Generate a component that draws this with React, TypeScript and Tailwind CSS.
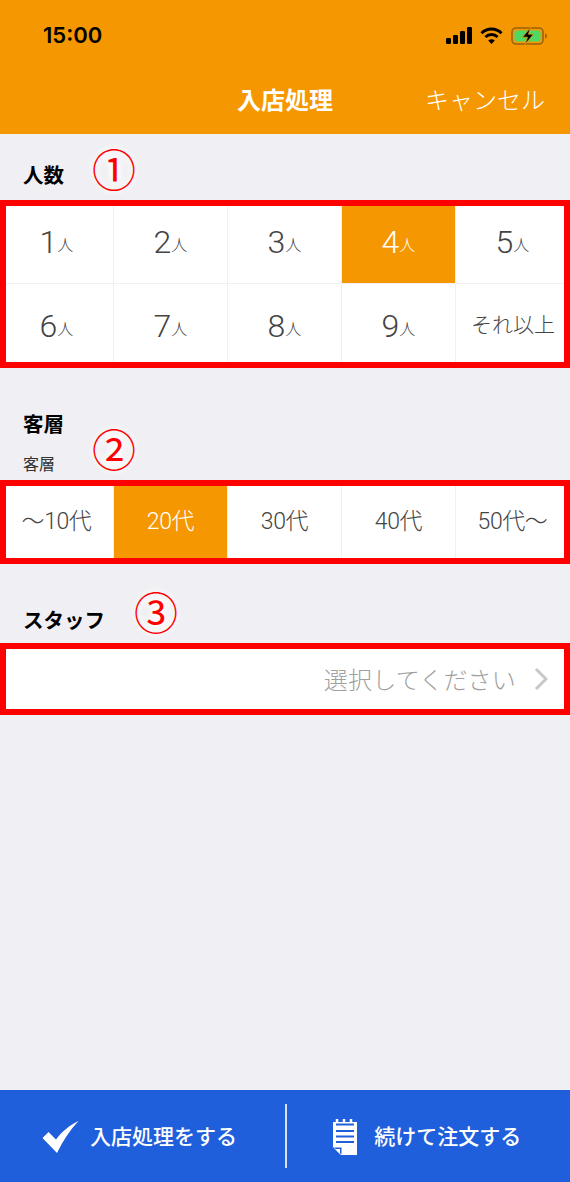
const jp = "font-['Liberation_Sans','Noto_Sans_CJK_JP',sans-serif]";
const thin = "font-['Roboto','Noto_Sans_CJK_JP',sans-serif] font-light";

const people = ["1", "2", "3", "4", "5", "6", "7", "8", "9"];
const ages = ["〜10代", "20代", "30代", "40代", "50代〜"];

function RedFrame() {
  return <div className="pointer-events-none absolute inset-0 border-[6px] border-[#ff0000]" />;
}

function Mark({ glyph, className }: { glyph: string; className: string }) {
  return (
    <span
      className={`absolute text-[44px] leading-none text-[#ff0000] font-['Noto_Sans_CJK_JP',sans-serif] [text-shadow:0_0_8px_#fff,0_0_8px_#fff,0_0_8px_#fff,0_0_8px_#fff] ${className}`}
    >
      {glyph}
    </span>
  );
}

function StatusIcons() {
  return (
    <div className="flex items-center gap-[8px]">
      <svg width="26" height="17" viewBox="0 0 26 17" fill="#000">
        <rect x="0" y="11" width="5" height="6" rx="1.2" />
        <rect x="7" y="8" width="5" height="9" rx="1.2" />
        <rect x="14" y="4" width="5" height="13" rx="1.2" />
        <rect x="21" y="0" width="5" height="17" rx="1.2" />
      </svg>
      <svg width="23" height="17" viewBox="0 0 23 17" fill="none" stroke="#000" strokeWidth="3">
        <path d="M1.5 6.2C7.2 0.6 15.8 0.6 21.5 6.2" />
        <path d="M5.4 10C8.9 6.7 14.1 6.7 17.6 10" />
        <path d="M11.5 17L8.2 13.4C10.2 11.9 12.8 11.9 14.8 13.4Z" fill="#000" stroke="none" />
      </svg>
      <svg width="37" height="18" viewBox="0 0 37 18" fill="none">
        <rect x="1" y="1" width="31" height="16" rx="4" stroke="#9a6310" strokeWidth="1.6" />
        <rect x="3.5" y="3.5" width="26" height="11" rx="2" fill="#4cd964" />
        <path d="M34 6.5C35.5 7 36 8 36 9C36 10 35.5 11 34 11.5Z" fill="#9a6310" />
        <path d="M19.5 0.5L11.5 10.2H16.5L14 17.5L22.5 7.2H17.5Z" fill="#000" stroke="#f59700" strokeWidth="0.8" />
      </svg>
    </div>
  );
}

export default function App() {
  return (
    <div className={`relative flex h-[1182px] w-[570px] flex-col overflow-hidden bg-[#efeff4] ${jp}`}>
      <header className="h-[134px] shrink-0 bg-[#f59700]">
        <div className="flex h-[71px] items-center justify-between pl-[43px] pr-[22px]">
          <span className="font-['Inter',sans-serif] text-[22px] font-semibold text-black">15:00</span>
          <StatusIcons />
        </div>
        <div className="relative flex h-[60px] items-center justify-center">
          <h1 className="text-[24px] font-bold text-white">入店処理</h1>
          <span className="absolute right-[25px] top-1/2 -translate-y-1/2 text-[24px] font-light text-white">キャンセル</span>
        </div>
      </header>

      <div className="flex h-[66px] items-center pl-[23px] pt-[18px]">
        <h2 className="text-[20.5px] font-bold text-black">人数</h2>
      </div>
      <section className="relative grid h-[168px] grid-cols-5 grid-rows-2 bg-white">
        {people.map((n) => (
          <div
            key={n}
            className={`flex items-center justify-center border-r-[1.5px] border-b-[1.5px] border-[#efeff4] ${thin} ${n === "4" ? "bg-[#f59700] text-white" : "text-[#444]"}`}
          >
            <span className="text-[32px] leading-none">{n}</span>
            <span className="mt-[8px] text-[16px] leading-none">人</span>
          </div>
        ))}
        <div className={`flex items-center justify-center text-[21px] text-[#444] ${thin}`}>それ以上</div>
        <RedFrame />
      </section>

      <div className="flex h-[112px] flex-col pl-[23px] pt-[42px]">
        <h2 className="text-[20.5px] font-bold leading-[30px] text-black">客層</h2>
        <p className="mt-[15px] text-[16px] leading-[20px] text-[#333]">客層</p>
      </div>
      <section className="relative grid h-[84px] grid-cols-5 bg-white">
        {ages.map((a) => (
          <div
            key={a}
            className={`flex items-center justify-center border-r-[1.5px] border-[#efeff4] text-[23px] tracking-[-0.4px] ${thin} ${a === "20代" ? "bg-[#f59700] text-white" : "text-[#444]"}`}
          >
            {a}
          </div>
        ))}
        <RedFrame />
      </section>

      <div className="flex h-[79px] items-end pl-[23px] pb-[6px]">
        <h2 className="text-[20.5px] font-bold text-black">スタッフ</h2>
      </div>
      <section className="relative flex h-[72px] items-center justify-end bg-white pr-[22px]">
        <span className="pt-[3px] text-[24px] tracking-[0.2px] font-light text-[#a0a0a0]">選択してください</span>
        <svg className="ml-[18px]" width="14" height="24" viewBox="0 0 14 24" fill="none" stroke="#c7c7cc" strokeWidth="3">
          <path d="M2 2L12 12L2 22" />
        </svg>
        <RedFrame />
      </section>

      <footer className="mt-auto flex h-[92px] items-center bg-[#1f5fdc] text-white">
        <button className="flex h-full w-[285px] items-center justify-center gap-[11px] pr-[6px] pt-[2px]">
          <svg width="37" height="32" viewBox="0 0 37 32" fill="#fff">
            <path d="M0.5 17L6.5 11L14 18.5C19.5 11 27 4.5 36.5 0C28 9 21 19.5 15 32Z" />
          </svg>
          <span className="text-[21px] font-medium">入店処理をする</span>
        </button>
        <div className="h-[64px] w-[1.5px] shrink-0 bg-[#d7e2f8]" />
        <button className="flex h-full flex-1 items-center justify-center gap-[16px] pr-[3px] pt-[2px]">
          <svg width="26" height="38" viewBox="0 0 26 38" fill="none">
            <path d="M1 4H25V37H9L1 29Z" fill="#fff" />
            <path d="M2 29.5H9.5V36.5" fill="#1f5fdc" />
            <path d="M3 31H8V36Z" fill="#fff" />
            <path d="M5 1V7M12 1V7M19 1V7" stroke="#fff" strokeWidth="2.5" />
            <path d="M4 6.5H22" stroke="#1f5fdc" strokeWidth="2" />
            <path d="M4 13H22M4 18.5H22M4 24H22" stroke="#1f5fdc" strokeWidth="2.2" />
          </svg>
          <span className="text-[21px] font-medium">続けて注文する</span>
        </button>
      </footer>

      <Mark glyph="①" className="left-[92px] top-[146px]" />
      <Mark glyph="②" className="left-[92px] top-[426px]" />
      <Mark glyph="③" className="left-[134px] top-[589px]" />
    </div>
  );
}
